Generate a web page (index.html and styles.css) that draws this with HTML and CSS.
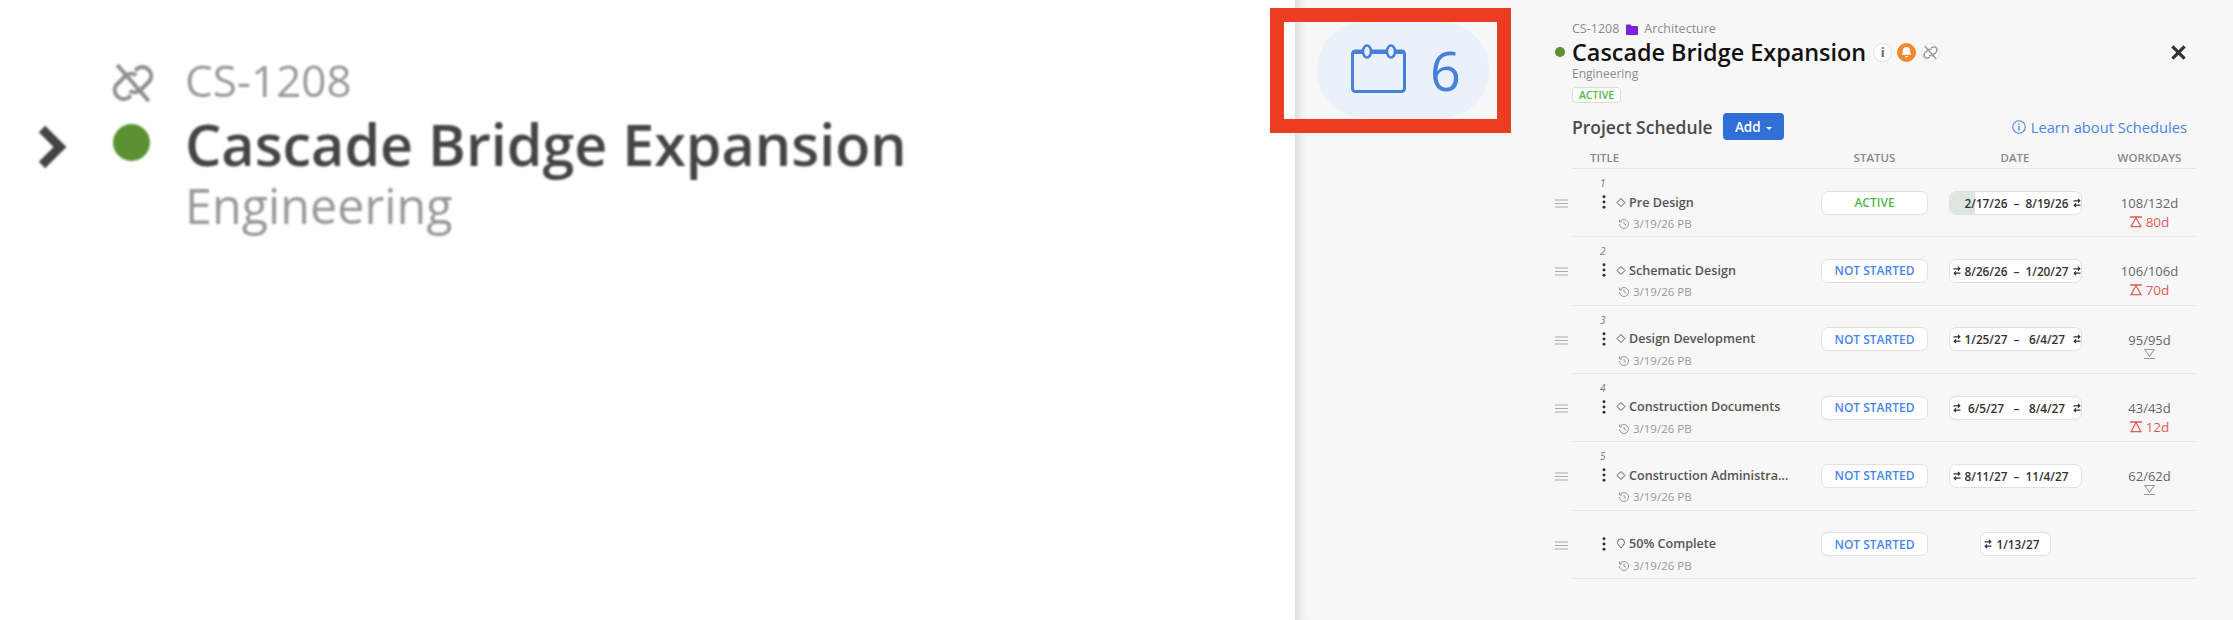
FILE: index.html
```html
<!DOCTYPE html>
<html lang="en">
<head>
  <meta charset="UTF-8" />
  <title>Project Schedule</title>
  <link rel="stylesheet" href="styles.css">
</head>
<body>
  <svg class="sprites" width="0" height="0">
    <symbol id="swap" viewBox="0 0 8 10">
      <path d="M0.500 2.800h6M5 1l1.800 1.800L5 4.600M7.500 7.200h-6M3 5.400L1.200 7.200 3 9" fill="none" stroke="currentColor" stroke-width="1.200"/>
    </symbol>
    <symbol id="history" viewBox="0 0 24 24">
      <path d="M3 12a9 9 0 1 0 9-9 9.750 9.750 0 0 0-6.740 2.740L3 8M3 3v5h5M12 7v5l4 2" fill="none" stroke="currentColor" stroke-width="2"/>
    </symbol>
    <symbol id="kebab" viewBox="0 0 6 16">
      <circle cx="3" cy="2" r="1.700"/><circle cx="3" cy="8" r="1.700"/><circle cx="3" cy="14" r="1.700"/>
    </symbol>
    <symbol id="diamond" viewBox="0 0 10 10">
      <path d="M5 1l4 4-4 4-4-4z" fill="none" stroke="currentColor" stroke-width="1"/>
    </symbol>
    <symbol id="handle" viewBox="0 0 13 9">
      <path d="M0 1h13M0 4.500h13M0 8h13" stroke="currentColor" stroke-width="1.100"/>
    </symbol>
    <symbol id="late" viewBox="0 0 12 12">
      <path d="M0 1h12M6 1.500L1 10.700h10z" fill="none" stroke="currentColor" stroke-width="1.300"/>
    </symbol>
    <symbol id="ontime" viewBox="0 0 12 12">
      <path d="M0.800 1h10.400L6 8.500zM0 11h12" fill="none" stroke="currentColor" stroke-width="1.100"/>
    </symbol>
    <symbol id="unlink" viewBox="0 0 24 24">
      <path d="M13 6.500l1-1a4 4 0 0 1 5.500 5.500l-4 4a4 4 0 0 1-5 .5M11 17.500l-1 1a4 4 0 0 1-5.500-5.500l4-4a4 4 0 0 1 5-.5M5 4l14 16" fill="none" stroke="currentColor" stroke-width="1.800"/>
    </symbol>
  </svg>

  <div class="page">
    <div class="detail">
      <svg class="detail-chevron" viewBox="0 0 30 44"><path d="M5 4l18 18L5 40" fill="none" stroke="#444" stroke-width="9"/></svg>
      <div class="detail-marks">
        <svg class="detail-link"><use href="#unlink"/></svg>
        <span class="detail-dot"></span>
      </div>
      <div class="detail-text">
        <div class="detail-code">CS-1208</div>
        <div class="detail-name">Cascade Bridge Expansion</div>
        <div class="detail-dept">Engineering</div>
      </div>
    </div>

    <div class="panel">
      <div class="rail">
        <div class="count-pill">
          <svg class="count-icon" viewBox="0 0 55 49">
            <rect x="1.500" y="7" width="52" height="40.500" rx="3" fill="none" stroke="currentColor" stroke-width="3"/>
            <path d="M1.500 8h52" stroke="currentColor" stroke-width="4"/>
            <ellipse cx="16" cy="7.500" rx="4" ry="6" fill="#eaf1fb" stroke="currentColor" stroke-width="2.500"/>
            <ellipse cx="40" cy="7.500" rx="4" ry="6" fill="#eaf1fb" stroke="currentColor" stroke-width="2.500"/>
          </svg>
          <span class="count-num">6</span>
        </div>
      </div>

      <div class="schedule">
        <div class="head">
          <div class="crumbs">
            <span>CS-1208</span>
            <svg class="folder" viewBox="0 0 12 11"><path d="M0 1.500A1 1 0 0 1 1 .5h3.500l1.200 1.500H11a1 1 0 0 1 1 1v7a1 1 0 0 1-1 1H1a1 1 0 0 1-1-1z" fill="#7a22dc"/></svg>
            <span>Architecture</span>
          </div>
          <div class="title-row">
            <span class="title-dot"></span>
            <h1>Cascade Bridge Expansion</h1>
            <span class="round-btn">i</span>
            <span class="round-btn bell">
              <svg viewBox="0 0 12 12"><path d="M6 1a3.300 3.300 0 0 0-3.300 3.300c0 2.700-1.200 3.700-1.200 3.700h9s-1.200-1-1.200-3.700A3.300 3.300 0 0 0 6 1zM4.700 9.200a1.300 1.300 0 0 0 2.600 0z" fill="#fff"/></svg>
            </span>
            <span class="round-btn"><svg class="round-link"><use href="#unlink"/></svg></span>
            <svg class="close" viewBox="0 0 14 14"><path d="M2 2l10 10M12 2L2 12" stroke="#333" stroke-width="2.600"/></svg>
          </div>
          <div class="dept">Engineering</div>
          <span class="tag">ACTIVE</span>
        </div>

        <div class="toolbar">
          <h2>Project Schedule</h2>
          <button class="add-btn">Add <i class="caret"></i></button>
          <a class="learn">
            <svg viewBox="0 0 14 14"><circle cx="7" cy="7" r="6.300" fill="none" stroke="currentColor" stroke-width="1.100"/><path d="M7 6v4.500M7 3.300v1.400" stroke="currentColor" stroke-width="1.400"/></svg>
            Learn about Schedules
          </a>
        </div>

        <div class="table">
          <div class="cols">
            <div class="col-title">TITLE</div>
            <div>STATUS</div>
            <div>DATE</div>
            <div>WORKDAYS</div>
          </div>

          <div class="row">
            <svg class="handle"><use href="#handle"/></svg>
            <div class="cell-title">
              <div class="num">1</div>
              <div class="name-line"><svg class="kebab"><use href="#kebab"/></svg><svg class="diamond"><use href="#diamond"/></svg><span class="name">Pre Design</span></div>
              <div class="sub"><svg class="clock"><use href="#history"/></svg>3/19/26 PB</div>
            </div>
            <div class="pill status on">ACTIVE</div>
            <div class="pill dates">
              <span class="fill"></span>
              <span class="swap-gap"></span><span class="d1">2/17/26</span><span class="dash">–</span><span class="d2">8/19/26</span><svg class="swap end"><use href="#swap"/></svg>
            </div>
            <div class="days">108/132d<div class="over"><svg class="hour"><use href="#late"/></svg>80d</div></div>
          </div>

          <div class="row">
            <svg class="handle"><use href="#handle"/></svg>
            <div class="cell-title">
              <div class="num">2</div>
              <div class="name-line"><svg class="kebab"><use href="#kebab"/></svg><svg class="diamond"><use href="#diamond"/></svg><span class="name">Schematic Design</span></div>
              <div class="sub"><svg class="clock"><use href="#history"/></svg>3/19/26 PB</div>
            </div>
            <div class="pill status">NOT STARTED</div>
            <div class="pill dates">
              <svg class="swap"><use href="#swap"/></svg><span class="d1">8/26/26</span><span class="dash">–</span><span class="d2">1/20/27</span><svg class="swap end"><use href="#swap"/></svg>
            </div>
            <div class="days">106/106d<div class="over"><svg class="hour"><use href="#late"/></svg>70d</div></div>
          </div>

          <div class="row">
            <svg class="handle"><use href="#handle"/></svg>
            <div class="cell-title">
              <div class="num">3</div>
              <div class="name-line"><svg class="kebab"><use href="#kebab"/></svg><svg class="diamond"><use href="#diamond"/></svg><span class="name">Design Development</span></div>
              <div class="sub"><svg class="clock"><use href="#history"/></svg>3/19/26 PB</div>
            </div>
            <div class="pill status">NOT STARTED</div>
            <div class="pill dates">
              <svg class="swap"><use href="#swap"/></svg><span class="d1">1/25/27</span><span class="dash">–</span><span class="d2">6/4/27</span><svg class="swap end"><use href="#swap"/></svg>
            </div>
            <div class="days">95/95d<div class="even"><svg class="hour"><use href="#ontime"/></svg></div></div>
          </div>

          <div class="row">
            <svg class="handle"><use href="#handle"/></svg>
            <div class="cell-title">
              <div class="num">4</div>
              <div class="name-line"><svg class="kebab"><use href="#kebab"/></svg><svg class="diamond"><use href="#diamond"/></svg><span class="name">Construction Documents</span></div>
              <div class="sub"><svg class="clock"><use href="#history"/></svg>3/19/26 PB</div>
            </div>
            <div class="pill status">NOT STARTED</div>
            <div class="pill dates">
              <svg class="swap"><use href="#swap"/></svg><span class="d1">6/5/27</span><span class="dash">–</span><span class="d2">8/4/27</span><svg class="swap end"><use href="#swap"/></svg>
            </div>
            <div class="days">43/43d<div class="over"><svg class="hour"><use href="#late"/></svg>12d</div></div>
          </div>

          <div class="row">
            <svg class="handle"><use href="#handle"/></svg>
            <div class="cell-title">
              <div class="num">5</div>
              <div class="name-line"><svg class="kebab"><use href="#kebab"/></svg><svg class="diamond"><use href="#diamond"/></svg><span class="name">Construction Administration</span></div>
              <div class="sub"><svg class="clock"><use href="#history"/></svg>3/19/26 PB</div>
            </div>
            <div class="pill status">NOT STARTED</div>
            <div class="pill dates">
              <svg class="swap"><use href="#swap"/></svg><span class="d1">8/11/27</span><span class="dash">–</span><span class="d2">11/4/27</span>
            </div>
            <div class="days">62/62d<div class="even"><svg class="hour"><use href="#ontime"/></svg></div></div>
          </div>

          <div class="row">
            <svg class="handle"><use href="#handle"/></svg>
            <div class="cell-title">
              <div class="num"></div>
              <div class="name-line"><svg class="kebab"><use href="#kebab"/></svg><svg class="pin" viewBox="0 0 10 12"><path d="M5 11C3 8.500 1.200 6.800 1.200 4.800a3.800 3.800 0 0 1 7.600 0C8.800 6.800 7 8.500 5 11z" fill="none" stroke="#555" stroke-width="1"/></svg><span class="name">50% Complete</span></div>
              <div class="sub"><svg class="clock"><use href="#history"/></svg>3/19/26 PB</div>
            </div>
            <div class="pill status">NOT STARTED</div>
            <div class="dates-wrap">
              <div class="pill single"><svg class="swap"><use href="#swap"/></svg><span>1/13/27</span></div>
            </div>
            <div class="days"></div>
          </div>
        </div>
      </div>
    </div>
  </div>

  <div class="callout"></div>
</body>
</html>
```

FILE: styles.css
```css
* { box-sizing: border-box; }
body { margin: 0; background: #fff; font-family: "Open Sans", Arial, sans-serif; color: #333; overflow: hidden; }
h1, h2 { margin: 0; }
.sprites { position: absolute; }
.page { display: flex; height: 620px; }

/* zoomed-in part on the left */
.detail { width: 1295px; display: flex; align-items: flex-start; padding-top: 50px; filter: blur(1px); }
.detail-chevron { width: 30px; height: 44px; margin: 75px 0 0 37px; }
.detail-marks { width: 72px; margin-left: 46px; display: flex; flex-direction: column; }
.detail-link { width: 54px; height: 54px; color: #8f8f8f; margin: 6px 0 0 -7px; }
.detail-dot { width: 37px; height: 37px; border-radius: 50%; background: #5a9132; margin-top: 14px; }
.detail-code { font-size: 44px; line-height: 60px; color: #999; }
.detail-name { font-size: 57.400px; line-height: 68px; font-weight: 600; color: #444; }
.detail-dept { font-size: 48.500px; line-height: 54px; color: #999; }

/* right panel */
.panel { flex: 1; display: flex; background: #f7f7f7; box-shadow: inset 10px 0 8px -6px rgba(0,0,0,0.12); }
.rail { width: 260px; padding: 22px 0 0 22px; }
.count-pill { width: 172px; height: 96px; border-radius: 48px; background: #eaf1fb; color: #4680d8; display: flex; align-items: center; padding-left: 34px; }
.count-icon { width: 55px; height: 49px; margin-top: -4px; }
.count-num { font-size: 54px; line-height: 60px; margin-left: 24px; }

.schedule { width: 641px; position: relative; }
.head { padding: 20px 0 0 17px; }
.crumbs { display: flex; align-items: center; font-size: 12.500px; line-height: 18px; color: #8c8c8c; }
.folder { width: 12px; height: 11px; margin: 0 6px 0 7px; }
.title-row { display: flex; align-items: center; height: 28px; position: relative; }
.title-dot { position: absolute; left: -17px; top: 9px; width: 10px; height: 10px; border-radius: 50%; background: #5a9132; }
h1 { font-size: 23.400px; font-weight: 600; color: #111; line-height: 28px; margin-right: 7px; }
.round-btn { width: 19px; height: 19px; border-radius: 50%; background: #fff; border: 1px solid #e4e4e4; margin-right: 5px; font-size: 13px; font-weight: 700; color: #666; display: flex; align-items: center; justify-content: center; }
.bell { background: #f0882f; border-color: #f0882f; }
.bell svg { width: 13px; height: 13px; }
.round-link { width: 19px; height: 19px; flex: none; color: #999; }
.close { width: 17px; height: 17px; position: absolute; right: 9px; top: 6px; }
.dept { font-size: 12px; line-height: 15px; color: #8c8c8c; }
.tag { display: block; margin-top: 6px; height: 16px; line-height: 14px; width: 49px; text-align: center; border: 1px solid #ddd; border-radius: 4px; background: #fff; font-size: 10.500px; font-weight: 600; color: #52b848; }
.toolbar { display: flex; align-items: center; height: 27px; margin-top: 10px; padding: 0 9px 0 17px; }
h2 { font-size: 17.500px; font-weight: 600; color: #4a4a4a; width: 141px; margin-right: 10px; white-space: nowrap; }
.add-btn { width: 61px; height: 27px; border: 0; border-radius: 4px; background: #2f6fd6; color: #fff; font: 600 13.500px "Open Sans", Arial, sans-serif; padding: 0; }
.caret { display: inline-block; width: 0; height: 0; margin: 0 0 2px 2px; border: 3px solid transparent; border-top-color: #fff; border-bottom: 0; }
.learn { margin-left: auto; display: flex; align-items: center; font-size: 14.700px; color: #4a86e0; }
.learn svg { width: 14px; height: 14px; margin-right: 5px; }

.table { margin-top: 9px; }
.cols, .row { display: grid; grid-template-columns: 229px 107px 134px 95px; column-gap: 20px; margin-left: 17px; }
.cols { height: 20px; border-bottom: 1px solid #e6e6e6; font-size: 11.500px; font-weight: 600; color: #888; line-height: 18px; text-align: center; }
.col-title { text-align: left; padding-left: 18px; }
.row { height: 68.330px; border-bottom: 1px solid #e9e9e9; position: relative; align-items: center; }
.handle { position: absolute; left: -17px; top: 30px; width: 13px; height: 9px; color: #aaa; }
.cell-title { align-self: start; padding: 6px 0 0 28px; }
.num { height: 16px; font-size: 10px; line-height: 16px; font-style: italic; color: #777; }
.name-line { display: flex; align-items: center; height: 22px; }
.kebab { width: 6px; height: 14px; fill: #333; margin-left: 1px; }
.diamond, .pin { width: 10px; height: 11px; color: #555; margin: 0 3px 0 9px; flex: none; }
.name { font-size: 12.600px; font-weight: 600; color: #555; width: 160px; white-space: nowrap; overflow: hidden; text-overflow: ellipsis; }
.sub { display: flex; align-items: center; font-size: 11.500px; line-height: 18px; margin: 2px 0 0 18px; color: #999; }
.clock { width: 12px; height: 12px; margin-right: 3px; color: #999; }

.pill { height: 24px; border: 1px solid #e1e1e1; border-radius: 7px; background: #fff; display: flex; align-items: center; }
.status { justify-content: center; font-size: 12px; font-weight: 600; color: #4a86e8; }
.status.on { color: #52b848; }
.dates { position: relative; overflow: hidden; margin-left: 1px; padding-left: 3px; font-size: 11.800px; font-weight: 600; color: #333; }
.fill { position: absolute; left: 0; top: 0; bottom: 0; width: 25px; background: #dde6df; }
.d1, .d2, .dash { position: relative; text-align: center; }
.d1, .d2 { width: 44px; flex: none; white-space: nowrap; }
.d1 { margin-left: 3px; }
.dash { width: 17px; flex: none; }
.dates-wrap { display: flex; justify-content: center; }
.single { width: 71px; padding-left: 3px; font-size: 11.800px; font-weight: 600; color: #333; }
.single span { margin-left: 5px; }
.swap { width: 8px; height: 10px; color: #333; flex: none; }
.swap.end { margin-left: 4px; }
.swap-gap { width: 8px; flex: none; }
.days { align-self: start; padding-top: 25px; text-align: center; font-size: 13px; line-height: 18px; color: #666; }
.over { display: flex; align-items: center; justify-content: center; margin-top: 1px; color: #e25b5b; font-size: 13.500px; }
.over .hour { width: 12px; height: 12px; margin-right: 4px; }
.even { display: flex; justify-content: center; color: #999; }
.even .hour { width: 11px; height: 12px; margin-top: -1px; }

/* red annotation box */
.callout { position: absolute; left: 1270px; top: 8px; width: 241px; height: 125px; border: 14px solid #ec3d22; }
```
